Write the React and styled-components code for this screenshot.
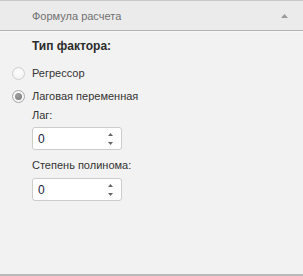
import React from "react";
import styled, { createGlobalStyle } from "styled-components";

const Global = createGlobalStyle`
  html, body { margin: 0; padding: 0; background: #f2f2f2; }
  body { font-family: "Liberation Sans", Arial, sans-serif; }
`;

const Panel = styled.div`
  width: 303px;
  height: 276px;
  box-sizing: border-box;
  display: flex;
  flex-direction: column;
  background: #f2f2f2;
  border-top: 1px solid #c9c9c9;
  border-bottom: 2px solid #b9b9b9;
`;

const Header = styled.div`
  height: 29px;
  display: flex;
  align-items: center;
  justify-content: space-between;
  padding: 0 15px 0 32px;
  background: #ebebeb;
  border-bottom: 1px solid #b3b3b3;
  box-shadow: 0 1px 0 #f7f7f7, 0 2px 0 #f5f5f5;
  color: #707070;
  font-size: 11px;
`;

const Caret = styled.svg`
  width: 7px;
  height: 4px;
  display: block;
`;

const Body = styled.div`
  flex: 1;
  display: flex;
  flex-direction: column;
  align-items: flex-start;
  padding: 7px 0 0 32px;
  font-size: 11px;
  color: #333333;
`;

const Title = styled.div`
  font-weight: bold;
  font-size: 12px;
  line-height: 16px;
  height: 16px;
  color: #2b2b2b;
`;

const Label = styled.div`
  line-height: 16px;
  height: 16px;
  margin-top: ${(p) => p.$mt}px;
`;

const RadioRow = styled.label`
  display: flex;
  align-items: center;
  gap: 7px;
  height: 16px;
  line-height: 16px;
  margin-left: -20px;
  margin-top: ${(p) => p.$mt}px;
`;

const RadioCircle = styled.span`
  width: 13px;
  height: 13px;
  box-sizing: border-box;
  border-radius: 50%;
  border: 1px solid ${(p) => (p.$checked ? "#a8a8a8" : "#cfcfcf")};
  background: radial-gradient(circle at 50% 40%, #ffffff 0%, #f3f3f3 70%, #e8e8e8 100%);
  display: flex;
  align-items: center;
  justify-content: center;
  flex-shrink: 0;
  &::after {
    content: "";
    display: ${(p) => (p.$checked ? "block" : "none")};
    width: 7px;
    height: 7px;
    border-radius: 50%;
    background: radial-gradient(circle at 40% 35%, #a0a0a0, #777777);
  }
`;

const Spinner = styled.div`
  width: 90px;
  height: 23px;
  box-sizing: border-box;
  margin-top: ${(p) => p.$mt}px;
  background: #ffffff;
  border: 1px solid #cccccc;
  border-radius: 3px;
  display: flex;
  align-items: center;
  justify-content: space-between;
  padding: 0 8px 0 5px;
`;

const Value = styled.span`
  font-size: 12px;
  color: #1a1a40;
`;

const Arrows = styled.div`
  display: flex;
  flex-direction: column;
  justify-content: space-between;
  height: 12px;
`;

const Tri = ({ up }) => (
  <svg width="5" height="3" viewBox="0 0 5 3" style={{ display: "block" }}>
    <path d={up ? "M2.5 0 L5 3 L0 3 Z" : "M0 0 L5 0 L2.5 3 Z"} fill="#666" />
  </svg>
);

const NumberBox = ({ value, mt }) => (
  <Spinner $mt={mt}>
    <Value>{value}</Value>
    <Arrows>
      <Tri up />
      <Tri />
    </Arrows>
  </Spinner>
);

export default function App() {
  return (
    <>
      <Global />
      <Panel>
        <Header>
          <span>Формула расчета</span>
          <Caret viewBox="0 0 7 4">
            <path d="M3.5 0 L7 4 L0 4 Z" fill="#9a9a9a" />
          </Caret>
        </Header>
        <Body>
          <Title>Тип фактора:</Title>
          <RadioRow $mt={11}>
            <RadioCircle />
            <span>Регрессор</span>
          </RadioRow>
          <RadioRow $mt={7}>
            <RadioCircle $checked />
            <span>Лаговая переменная</span>
          </RadioRow>
          <Label $mt={3}>Лаг:</Label>
          <NumberBox value="0" mt={4} />
          <Label $mt={7}>Степень полинома:</Label>
          <NumberBox value="0" mt={5} />
        </Body>
      </Panel>
    </>
  );
}
